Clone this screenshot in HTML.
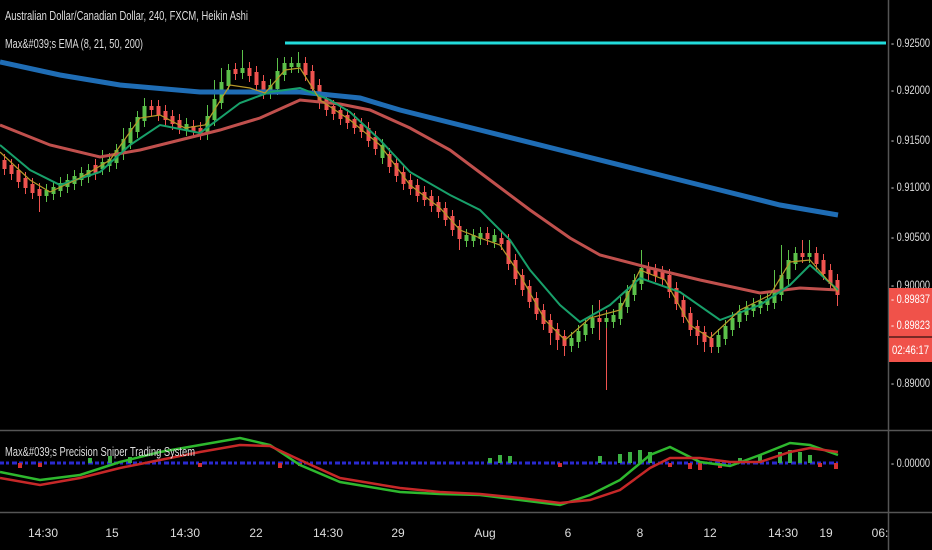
<!DOCTYPE html>
<html><head><style>
html,body{margin:0;padding:0;background:#000;width:932px;height:550px;overflow:hidden}
svg{display:block}
text{font-family:"Liberation Sans",sans-serif;}
</style></head><body>
<svg width="932" height="550" viewBox="0 0 932 550" xmlns="http://www.w3.org/2000/svg">
<rect width="932" height="550" fill="#000"/>
<!-- red wicks -->
<path fill="none" stroke="#ef5350" stroke-width="1" d="M4.5,154V175M11.5,159V180M18.5,164V188M25.5,172V194M32.5,178V199M39.5,183V212M95.5,159V180M151.5,100V116M158.5,100V121M165.5,105V126M172.5,110V130M179.5,114V134M193.5,120V138M200.5,122V140M235.5,63V80M249.5,62V82M256.5,66V91M263.5,75V99M305.5,57V81M312.5,65V95M319.5,79V109M326.5,93V116M333.5,100V120M340.5,104V125M347.5,109V129M354.5,113V134M361.5,118V138M368.5,122V147M375.5,131V155M389.5,148V173M396.5,157V182M403.5,166V190M410.5,174V195M417.5,179V202M424.5,186V206M431.5,190V212M438.5,196V218M445.5,202V226M452.5,210V236M459.5,220V250M487.5,227V245M501.5,232V250M508.5,234V270M515.5,254V285M522.5,269V296M529.5,280V308M536.5,292V320M543.5,304V330M550.5,314V345M557.5,323V350M564.5,330V356M599.5,300V340M606.5,310V390M648.5,262V280M655.5,264V282M662.5,266V285M669.5,269V298M676.5,282V310M683.5,294V323M690.5,307V336M697.5,320V345M704.5,326V352M711.5,332V353M802.5,240V263M816.5,247V270M823.5,254V280M830.5,264V290M837.5,274V306"/>
<path fill="none" stroke="#ef5350" stroke-width="4" d="M4.5,160V169M11.5,165V174M18.5,170V182M25.5,178V188M32.5,184V193M39.5,189V196M95.5,165V174M151.5,106V110M158.5,106V115M165.5,111V120M172.5,116V124M179.5,120V128M193.5,126V132M200.5,128V134M235.5,69V74M249.5,68V76M256.5,72V85M263.5,81V93M305.5,63V75M312.5,71V89M319.5,85V103M326.5,99V110M333.5,106V114M340.5,110V119M347.5,115V123M354.5,119V128M361.5,124V132M368.5,128V141M375.5,137V149M389.5,154V167M396.5,163V176M403.5,172V184M410.5,180V189M417.5,185V196M424.5,192V200M431.5,196V206M438.5,202V212M445.5,208V220M452.5,216V230M459.5,226V239M487.5,233V239M501.5,238V244M508.5,240V264M515.5,260V279M522.5,275V290M529.5,286V302M536.5,298V314M543.5,310V324M550.5,320V333M557.5,329V340M564.5,336V346M599.5,318V322M648.5,268V274M655.5,270V276M662.5,272V279M669.5,275V292M676.5,288V304M683.5,300V317M690.5,313V330M697.5,326V336M704.5,332V342M711.5,338V347M802.5,253V257M816.5,253V264M823.5,260V274M830.5,270V284M837.5,280V295"/>
<!-- green wicks -->
<path fill="none" stroke="#5cc14a" stroke-width="1" d="M46.5,184V202M53.5,181V200M60.5,177V197M67.5,174V193M74.5,170V190M81.5,167V186M88.5,164V183M102.5,150V175M109.5,153V172M116.5,144V169M123.5,128V160M130.5,122V149M137.5,111V138M144.5,98V127M186.5,118V136M207.5,105V140M214.5,80V126M221.5,68V109M228.5,64V92M242.5,50V79M270.5,79V99M277.5,58V95M284.5,57V81M291.5,57V73M298.5,52V73M382.5,139V164M466.5,229V247M473.5,229V247M480.5,227V245M494.5,229V248M571.5,332V352M578.5,325V348M585.5,318V341M592.5,305V334M606.5,312V328M613.5,309V328M620.5,297V325M627.5,285V313M634.5,274V301M641.5,250V290M718.5,329V353M725.5,320V345M732.5,312V336M739.5,305V328M746.5,301V321M753.5,298V317M760.5,295V314M767.5,293V311M774.5,270V309M781.5,245V301M788.5,250V285M795.5,247V270M809.5,240V263"/>
<path fill="none" stroke="#5cc14a" stroke-width="4" d="M46.5,190V196M53.5,187V194M60.5,183V191M67.5,180V187M74.5,176V184M81.5,173V180M88.5,170V177M102.5,162V169M109.5,159V166M116.5,150V163M123.5,139V154M130.5,128V143M137.5,117V132M144.5,106V121M186.5,124V130M207.5,116V134M214.5,99V120M221.5,82V103M228.5,70V86M242.5,68V73M270.5,85V93M277.5,71V89M284.5,63V75M291.5,63V67M298.5,63V67M382.5,145V158M466.5,235V241M473.5,235V241M480.5,233V239M494.5,235V242M571.5,338V346M578.5,331V342M585.5,324V335M592.5,318V328M606.5,318V322M613.5,315V322M620.5,303V319M627.5,291V307M634.5,280V295M641.5,268V284M718.5,335V347M725.5,326V339M732.5,318V330M739.5,311V322M746.5,307V315M753.5,304V311M760.5,301V308M767.5,299V305M774.5,291V303M781.5,275V295M788.5,260V279M795.5,253V264M809.5,253V257"/>
<polyline fill="none" stroke="#1f6db5" stroke-width="5" points="0,62 60,75 120,85 200,92 300,92 360,98 400,110 480,130 560,150 640,170 720,190 780,205 838,215"/>
<polyline fill="none" stroke="#c0504d" stroke-width="3" points="0,125 50,145 100,157 140,150 180,140 220,130 260,118 300,100 340,104 370,110 410,128 450,150 490,180 530,210 570,238 600,255 650,268 700,280 760,293 800,288 838,290"/>
<polyline fill="none" stroke="#18a06a" stroke-width="2" points="0,145 30,170 60,185 100,172 130,145 160,125 200,133 240,103 270,92 300,88 330,100 350,112 380,140 410,172 450,195 480,210 510,240 530,270 560,305 580,322 610,305 640,278 680,292 720,320 760,305 790,285 810,265 838,290"/>
<polyline fill="none" stroke="#b89a2a" stroke-width="1.2" points="0,152 30,180 50,192 80,178 110,160 140,118 160,115 185,128 205,125 230,85 250,88 265,93 285,70 300,68 320,100 350,120 380,145 410,185 440,208 460,230 480,238 500,245 520,275 545,320 565,340 590,318 620,310 640,270 665,280 690,325 710,338 740,310 770,295 790,262 810,260 838,292"/>
<line x1="285" y1="43" x2="886" y2="43" stroke="#22dcdc" stroke-width="3"/>
<!-- oscillator histogram -->
<line x1="0" y1="463" x2="838" y2="463" stroke="#2a2ad0" stroke-width="3" stroke-dasharray="4 2 3 3 5 2"/>
<path fill="none" stroke="#3cb043" stroke-width="4" d="M90,458V463M110,456V463M130,457V463M490,458V463M500,455V463M510,456V463M600,456V463M620,454V463M630,452V463M640,450V463M650,452V463M740,458V463M760,455V463M780,452V463M790,450V463M800,452V463M810,455V463"/>
<path fill="none" stroke="#d32f2f" stroke-width="4" d="M20,463V468M40,463V467M200,463V467M280,463V468M300,463V466M560,463V467M670,463V467M690,463V469M700,463V470M720,463V468M820,463V467M836,463V469"/>
<polyline fill="none" stroke="#2eb82e" stroke-width="2.5" points="0,472 40,480 80,475 120,462 160,452 200,445 240,438 270,445 300,465 340,482 400,492 440,494 480,495 520,500 560,505 590,495 620,480 650,455 670,447 700,462 730,466 760,455 790,443 810,445 838,455"/>
<polyline fill="none" stroke="#c62828" stroke-width="2.5" points="0,478 40,485 80,478 120,468 160,460 200,452 240,445 270,446 300,460 340,478 400,488 440,492 480,494 520,498 560,503 590,500 620,490 650,468 670,458 700,458 730,462 760,462 790,452 810,448 838,452"/>
<line x1="888.5" y1="0" x2="888.5" y2="550" stroke="#555" stroke-width="1.5"/>
<line x1="0" y1="430.5" x2="932" y2="430.5" stroke="#555" stroke-width="1.5"/>
<line x1="0" y1="512.5" x2="932" y2="512.5" stroke="#555" stroke-width="1.5"/>
<text x="5" y="20" fill="#ddd" font-size="12.5" textLength="243" lengthAdjust="spacingAndGlyphs">Australian Dollar/Canadian Dollar, 240, FXCM, Heikin Ashi</text>
<text x="5" y="48" fill="#ddd" font-size="12.5" textLength="138" lengthAdjust="spacingAndGlyphs">Max&amp;#039;s EMA (8, 21, 50, 200)</text>
<text x="5" y="456" fill="#ddd" font-size="12.5" textLength="190" lengthAdjust="spacingAndGlyphs">Max&amp;#039;s Precision Sniper Trading System</text>
<g fill="#ddd" font-size="12">
<text x="891" y="47" textLength="39" lengthAdjust="spacingAndGlyphs">- 0.92500</text>
<text x="891" y="94" textLength="39" lengthAdjust="spacingAndGlyphs">- 0.92000</text>
<text x="891" y="144" textLength="39" lengthAdjust="spacingAndGlyphs">- 0.91500</text>
<text x="891" y="191" textLength="39" lengthAdjust="spacingAndGlyphs">- 0.91000</text>
<text x="891" y="241" textLength="39" lengthAdjust="spacingAndGlyphs">- 0.90500</text>
<text x="891" y="289" textLength="39" lengthAdjust="spacingAndGlyphs">- 0.90000</text>
<text x="891" y="387" textLength="39" lengthAdjust="spacingAndGlyphs">- 0.89000</text>
<text x="891" y="467" textLength="39" lengthAdjust="spacingAndGlyphs">- 0.00000</text>
</g>
<rect x="889" y="288" width="43" height="74" fill="#f0524a"/>
<line x1="889" y1="337" x2="932" y2="337" stroke="#000" stroke-width="1"/>
<g fill="#fff" font-size="12">
<text x="891" y="303" textLength="39" lengthAdjust="spacingAndGlyphs">- 0.89837</text>
<text x="891" y="329" textLength="39" lengthAdjust="spacingAndGlyphs">- 0.89823</text>
<text x="892" y="354" textLength="37" lengthAdjust="spacingAndGlyphs">02:46:17</text>
</g>
<g fill="#ddd" font-size="12" text-anchor="middle">
<text x="43" y="537">14:30</text><text x="112" y="537">15</text><text x="185" y="537">14:30</text><text x="256" y="537">22</text><text x="328" y="537">14:30</text><text x="398" y="537">29</text><text x="485" y="537">Aug</text><text x="568" y="537">6</text><text x="640" y="537">8</text><text x="710" y="537">12</text><text x="783" y="537">14:30</text><text x="826" y="537">19</text><text x="880" y="537">06:</text>
</g>
</svg>
</body></html>
